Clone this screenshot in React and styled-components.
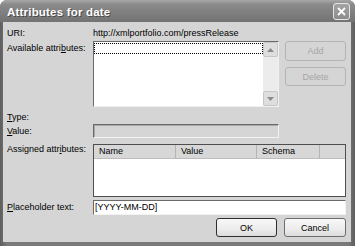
import React from "react";
import styled, { createGlobalStyle } from "styled-components";

const GlobalStyle = createGlobalStyle`
  body {
    margin: 0;
    background: #ffffff;
    font-family: "Liberation Sans", Arial, sans-serif;
  }
`;

const Window = styled.div`
  width: 355px;
  height: 246px;
  display: flex;
  flex-direction: column;
  background: linear-gradient(90deg, #5e5e5e, #7a7a7a 2%, #7a7a7a 98%, #5e5e5e);
  border-radius: 7px 7px 0 0;
  overflow: hidden;
  box-sizing: border-box;
`;

const TitleBar = styled.div`
  height: 22px;
  flex: none;
  display: flex;
  align-items: center;
  justify-content: space-between;
  padding: 0 5px 0 7px;
  background: linear-gradient(#a8a8a8, #8a8a8a 20%, #7e7e7e 60%, #737373);
`;

const Title = styled.span`
  color: #ffffff;
  font-weight: bold;
  font-size: 11.5px;
  letter-spacing: 0.2px;
  text-shadow: 1px 1px 0 #4a4a4a;
  padding-top: 2px;
`;

const CloseButton = styled.div`
  width: 15px;
  height: 15px;
  margin-top: 1px;
  border: 1px solid #e6e6e6;
  border-radius: 3px;
  background: linear-gradient(#a4a4a4, #8c8c8c);
  display: flex;
  align-items: center;
  justify-content: center;
`;

const Body = styled.div`
  flex: 1;
  margin: 0 4px 4px 3px;
  background: #d5d5d5;
  padding: 6px 5px 0 4px;
  display: flex;
  flex-direction: column;
  font-size: 9px;
  color: #000;
`;

const Row = styled.div`
  display: grid;
  grid-template-columns: 86px auto;
  align-items: ${({ $align }) => $align || "start"};
  margin-top: ${({ $top }) => $top || 0}px;
`;

const Label = styled.div`
  line-height: 11px;
  white-space: nowrap;
  padding-top: ${({ $pad }) => $pad || 0}px;
`;

const Text = styled.div`
  line-height: 11px;
  white-space: nowrap;
`;

const Key = styled.span`
  text-decoration: underline;
`;

const ListArea = styled.div`
  display: flex;
`;

const ListBox = styled.div`
  width: 186px;
  height: 66px;
  box-sizing: border-box;
  background: #ffffff;
  border: 1px solid;
  border-color: #6a6a6a #f0f0f0 #f0f0f0 #6a6a6a;
  display: flex;
`;

const ListItems = styled.div`
  flex: 1;
  padding: 1px 0 0 0;
`;

const FocusItem = styled.div`
  height: 11px;
  box-sizing: border-box;
  border: 1px dotted #000;
`;

const ScrollBar = styled.div`
  width: 15px;
  background: #ececec;
  display: flex;
  flex-direction: column;
  justify-content: space-between;
`;

const ScrollButton = styled.div`
  width: 15px;
  height: 15px;
  box-sizing: border-box;
  background: #dedede;
  border: 1px solid #c6c6c6;
  border-radius: 2px;
  display: flex;
  align-items: center;
  justify-content: center;
`;

const SideButtons = styled.div`
  margin-left: 6px;
  display: flex;
  flex-direction: column;
  gap: 6px;
`;

const Button = styled.div`
  width: ${({ $w }) => $w || 61}px;
  height: ${({ $h }) => $h || 19}px;
  box-sizing: border-box;
  border: 1px solid ${({ $disabled, $default }) =>
    $disabled ? "#b4b4b4" : $default ? "#2e2e2e" : "#6e6e6e"};
  border-radius: 3px;
  background: ${({ $disabled }) =>
    $disabled ? "#d5d5d5" : "linear-gradient(#f8f8f8, #ececec 60%, #dcdcdc)"};
  color: ${({ $disabled }) => ($disabled ? "#a6a6a6" : "#000")};
  display: flex;
  align-items: center;
  justify-content: center;
  font-size: 9px;
`;

const ValueField = styled.div`
  width: 186px;
  height: 14px;
  box-sizing: border-box;
  background: #d5d5d5;
  border: 1px solid;
  border-color: #6a6a6a #f2f2f2 #f2f2f2 #6a6a6a;
  box-shadow: inset 1px 1px 0 #a8a8a8;
`;

const Table = styled.div`
  width: 253px;
  height: 53px;
  box-sizing: border-box;
  background: #ffffff;
  border: 1px solid #4e4e4e;
`;

const HeaderRow = styled.div`
  display: flex;
  height: 13px;
  background: #d7d7d7;
  border-bottom: 1px solid #bcbcbc;
`;

const HeaderCell = styled.div`
  width: ${({ $w }) => ($w ? `${$w}px` : "auto")};
  flex: ${({ $w }) => ($w ? "none" : 1)};
  box-sizing: border-box;
  padding-left: 5px;
  line-height: 13px;
  border-right: ${({ $last }) => ($last ? "none" : "1px solid #b4b4b4")};
`;

const TextInput = styled.div`
  width: 253px;
  height: 15px;
  box-sizing: border-box;
  background: #ffffff;
  border: 1px solid;
  border-color: #6a6a6a #f2f2f2 #f2f2f2 #6a6a6a;
  padding-left: 1px;
  line-height: 13px;
`;

const Footer = styled.div`
  display: flex;
  justify-content: flex-end;
  gap: 7px;
  margin-top: 3px;
`;

const Arrow = ({ up }) => (
  <svg width="7" height="4" viewBox="0 0 7 4">
    <path d={up ? "M0 4 L3.5 0 L7 4 Z" : "M0 0 L3.5 4 L7 0 Z"} fill="#8a8a8a" />
  </svg>
);

export default function App() {
  return (
    <>
      <GlobalStyle />
      <Window>
        <TitleBar>
          <Title>Attributes for date</Title>
          <CloseButton>
            <svg width="9" height="9" viewBox="0 0 9 9">
              <path d="M1 1 L8 8 M8 1 L1 8" stroke="#ffffff" strokeWidth="1.8" />
            </svg>
          </CloseButton>
        </TitleBar>
        <Body>
          <Row>
            <Label>URI:</Label>
            <Text>http://xmlportfolio.com/pressRelease</Text>
          </Row>
          <Row $top={2}>
            <Label $pad={2}>
              Available attri<Key>b</Key>utes:
            </Label>
            <ListArea>
              <ListBox>
                <ListItems>
                  <FocusItem />
                </ListItems>
                <ScrollBar>
                  <ScrollButton>
                    <Arrow up />
                  </ScrollButton>
                  <ScrollButton>
                    <Arrow />
                  </ScrollButton>
                </ScrollBar>
              </ListBox>
              <SideButtons>
                <Button $disabled $h={20}>Add</Button>
                <Button $disabled>Delete</Button>
              </SideButtons>
            </ListArea>
          </Row>
          <Row $top={5}>
            <Label>
              <Key>T</Key>ype:
            </Label>
            <Text />
          </Row>
          <Row $top={1} $align="center">
            <Label>
              <Key>V</Key>alue:
            </Label>
            <ValueField />
          </Row>
          <Row $top={6}>
            <Label $pad={0}>
              Assigned attr<Key>i</Key>butes:
            </Label>
            <Table>
              <HeaderRow>
                <HeaderCell $w={82}>Name</HeaderCell>
                <HeaderCell $w={81}>Value</HeaderCell>
                <HeaderCell $w={63}>Schema</HeaderCell>
                <HeaderCell $last />
              </HeaderRow>
            </Table>
          </Row>
          <Row $top={3} $align="center">
            <Label>
              <Key>P</Key>laceholder text:
            </Label>
            <TextInput>[YYYY-MM-DD]</TextInput>
          </Row>
          <Footer>
            <Button $default $w={61}>OK</Button>
            <Button $w={62}>Cancel</Button>
          </Footer>
        </Body>
      </Window>
    </>
  );
}
